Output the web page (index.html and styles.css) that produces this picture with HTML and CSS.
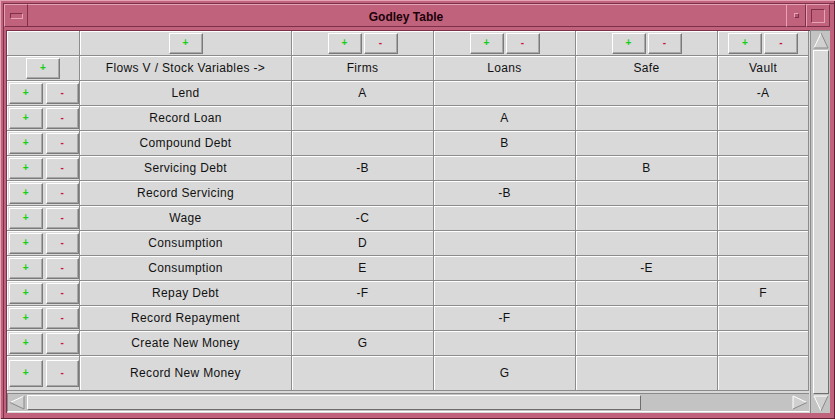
FILE: index.html
```html
<!DOCTYPE html>
<html>
<head>
<meta charset="utf-8">
<title>Godley Table</title>
<link rel="stylesheet" href="styles.css">
</head>
<body>
<div class="window">
  <div class="titlebar">
    <div class="tb-btn tb-menu"><span class="menu-icon"></span></div>
    <div class="tb-title">Godley Table</div>
    <div class="tb-btn tb-min"><span class="min-icon"></span></div>
    <div class="tb-btn tb-max"><span class="max-icon"></span></div>
  </div>
  <div class="client">
    <div class="main">
      <div class="table">
        <!-- row 0 -->
        <div class="cell"></div>
        <div class="cell"><span class="btn plus">+</span></div>
        <div class="cell pair"><span class="btn plus">+</span><span class="btn minus">-</span></div>
        <div class="cell pair"><span class="btn plus">+</span><span class="btn minus">-</span></div>
        <div class="cell pair"><span class="btn plus">+</span><span class="btn minus">-</span></div>
        <div class="cell pair"><span class="btn plus">+</span><span class="btn minus">-</span></div>
        <!-- row 1 -->
        <div class="cell"><span class="btn plus">+</span></div>
        <div class="cell">Flows V / Stock Variables -&gt;</div>
        <div class="cell">Firms</div>
        <div class="cell">Loans</div>
        <div class="cell">Safe</div>
        <div class="cell">Vault</div>
        <!-- data rows -->
        <div class="cell ctl"><span class="btn plus">+</span><span class="btn minus">-</span></div>
        <div class="cell">Lend</div><div class="cell">A</div><div class="cell"></div><div class="cell"></div><div class="cell">-A</div>

        <div class="cell ctl"><span class="btn plus">+</span><span class="btn minus">-</span></div>
        <div class="cell">Record Loan</div><div class="cell"></div><div class="cell">A</div><div class="cell"></div><div class="cell"></div>

        <div class="cell ctl"><span class="btn plus">+</span><span class="btn minus">-</span></div>
        <div class="cell">Compound Debt</div><div class="cell"></div><div class="cell">B</div><div class="cell"></div><div class="cell"></div>

        <div class="cell ctl"><span class="btn plus">+</span><span class="btn minus">-</span></div>
        <div class="cell">Servicing Debt</div><div class="cell">-B</div><div class="cell"></div><div class="cell">B</div><div class="cell"></div>

        <div class="cell ctl"><span class="btn plus">+</span><span class="btn minus">-</span></div>
        <div class="cell">Record Servicing</div><div class="cell"></div><div class="cell">-B</div><div class="cell"></div><div class="cell"></div>

        <div class="cell ctl"><span class="btn plus">+</span><span class="btn minus">-</span></div>
        <div class="cell">Wage</div><div class="cell">-C</div><div class="cell"></div><div class="cell"></div><div class="cell"></div>

        <div class="cell ctl"><span class="btn plus">+</span><span class="btn minus">-</span></div>
        <div class="cell">Consumption</div><div class="cell">D</div><div class="cell"></div><div class="cell"></div><div class="cell"></div>

        <div class="cell ctl"><span class="btn plus">+</span><span class="btn minus">-</span></div>
        <div class="cell">Consumption</div><div class="cell">E</div><div class="cell"></div><div class="cell">-E</div><div class="cell"></div>

        <div class="cell ctl"><span class="btn plus">+</span><span class="btn minus">-</span></div>
        <div class="cell">Repay Debt</div><div class="cell">-F</div><div class="cell"></div><div class="cell"></div><div class="cell">F</div>

        <div class="cell ctl"><span class="btn plus">+</span><span class="btn minus">-</span></div>
        <div class="cell">Record Repayment</div><div class="cell"></div><div class="cell">-F</div><div class="cell"></div><div class="cell"></div>

        <div class="cell ctl"><span class="btn plus">+</span><span class="btn minus">-</span></div>
        <div class="cell">Create New Money</div><div class="cell">G</div><div class="cell"></div><div class="cell"></div><div class="cell"></div>

        <div class="cell ctl tall"><span class="btn plus">+</span><span class="btn minus">-</span></div>
        <div class="cell">Record New Money</div><div class="cell"></div><div class="cell">G</div><div class="cell"></div><div class="cell"></div>
      </div>
      <div class="hscroll">
        <svg class="arrow" width="16" height="15" viewBox="0 0 16 15"><polygon points="1,7.5 15,1 15,14" fill="#d0d0d0"/><polyline points="15,1 1,7.5" fill="none" stroke="#ffffff"/><polyline points="1,7.5 15,14 15,1" fill="none" stroke="#8a8a8a"/></svg>
        <div class="htrack"><div class="hthumb"></div></div>
        <svg class="arrow" width="16" height="15" viewBox="0 0 16 15"><polygon points="15,7.5 1,1 1,14" fill="#d0d0d0"/><polyline points="1,14 1,1 15,7.5" fill="none" stroke="#ffffff"/><polyline points="15,7.5 1,14" fill="none" stroke="#8a8a8a"/></svg>
      </div>
    </div>
    <div class="vscroll">
      <svg class="arrow" width="16" height="17" viewBox="0 0 16 17"><polygon points="8,1 1,16 15,16" fill="#d0d0d0"/><polyline points="1,16 8,1" fill="none" stroke="#ffffff"/><polyline points="8,1 15,16 1,16" fill="none" stroke="#8a8a8a"/></svg>
      <div class="vthumb"></div>
      <svg class="arrow" width="16" height="17" viewBox="0 0 16 17"><polygon points="8,16 1,1 15,1" fill="#d0d0d0"/><polyline points="8,16 1,1 15,1" fill="none" stroke="#ffffff"/><polyline points="15,1 8,16" fill="none" stroke="#8a8a8a"/></svg>
    </div>
  </div>
</div>
</body>
</html>
```
FILE: styles.css
```css
html, body {
  margin: 0;
  padding: 0;
  background: #c1627c;
}

.window {
  width: 835px;
  height: 419px;
  box-sizing: border-box;
  background: #c1627c;
  padding: 0 5px 6px 6px;
  display: flex;
  flex-direction: column;
  box-shadow: inset 1px 1px 0 #e6a3b6, inset -1px -1px 0 #5e1e33, inset 3px 3px 0 #c1627c, inset 4px 4px 0 #7c3049;
  font-family: "Liberation Sans", Arial, sans-serif;
}

.titlebar {
  height: 30px;
  box-sizing: border-box;
  padding: 4px 0 3px 0;
  margin-left: -2px;
  display: flex;
}

.tb-btn {
  height: 23px;
  box-sizing: border-box;
  border-top: 1px solid #e6a3b6;
  border-left: 1px solid #e6a3b6;
  border-bottom: 1px solid #7c3049;
  border-right: 1px solid #7c3049;
  display: flex;
  align-items: center;
  justify-content: center;
}

.tb-menu { width: 24px; }
.tb-min { width: 20px; }
.tb-max { width: 24px; }

.menu-icon {
  width: 13px;
  height: 6px;
  box-sizing: border-box;
  border-top: 1px solid #7c3049;
  border-left: 1px solid #7c3049;
  border-bottom: 1px solid #e6a3b6;
  border-right: 1px solid #e6a3b6;
  margin-top: 1px;
}

.min-icon {
  width: 5px;
  height: 5px;
  box-sizing: border-box;
  background: #b05570;
  border-top: 1px solid #e6a3b6;
  border-left: 1px solid #e6a3b6;
  border-bottom: 1px solid #7c3049;
  border-right: 1px solid #7c3049;
}

.max-icon {
  width: 14px;
  height: 14px;
  box-sizing: border-box;
  border-top: 1px solid #7c3049;
  border-left: 1px solid #7c3049;
  border-bottom: 1px solid #e6a3b6;
  border-right: 1px solid #e6a3b6;
}

.tb-title {
  flex: 1;
  height: 23px;
  box-sizing: border-box;
  border-top: 1px solid #e6a3b6;
  border-bottom: 1px solid #7c3049;
  display: flex;
  align-items: center;
  justify-content: center;
  font-weight: bold;
  font-size: 12px;
  color: #1a0008;
  padding-right: 2px;
  padding-top: 2px;
}

.client {
  flex: 1;
  display: flex;
  background: #d9d9d9;
  box-shadow: inset 1px 1px 0 #7c3049;
}

.main {
  display: flex;
  flex-direction: column;
  padding: 1px 0 0 1px;
}

.table {
  display: grid;
  grid-template-columns: 73px 212px 142px 142px 142px 91px;
  grid-template-rows: repeat(13, 25px) 35px;
  width: 802px;
  background: #d9d9d9;
}

.cell {
  box-sizing: border-box;
  border-right: 1px solid #8c8c8c;
  border-bottom: 1px solid #8c8c8c;
  box-shadow: inset 1px 1px 0 #ffffff;
  display: flex;
  align-items: center;
  justify-content: center;
  font-size: 12px;
  letter-spacing: 0.35px;
  color: #111;
  gap: 2px;
}

.cell.ctl {
  justify-content: flex-start;
  padding-left: 2px;
  gap: 3px;
}

.btn {
  width: 34px;
  height: 21px;
  box-sizing: border-box;
  background: #d9d9d9;
  border-top: 1px solid #ffffff;
  border-left: 1px solid #ffffff;
  border-right: 1px solid #7a7a7a;
  border-bottom: 1px solid #7a7a7a;
  box-shadow: inset -1px -1px 0 #a8a8a8;
  display: flex;
  align-items: center;
  justify-content: center;
  font-weight: bold;
  font-size: 10px;
  letter-spacing: 0;
  line-height: 1;
}

.cell.tall .btn { height: 27px; }

.plus { color: #10d010; }
.minus { color: #d0103c; }

.hscroll {
  margin-top: 2px;
  height: 19px;
  width: 802px;
  box-sizing: border-box;
  display: flex;
  align-items: center;
  background: #c3c3c3;
  border-top: 1px solid #8a8a8a;
  border-left: 1px solid #8a8a8a;
  border-bottom: 1px solid #ffffff;
  padding: 0 1px;
}

.htrack {
  flex: 1;
  height: 17px;
  display: flex;
  align-items: center;
  padding: 0 2px;
}

.hthumb {
  width: 614px;
  height: 15px;
  box-sizing: border-box;
  background: #d9d9d9;
  border-top: 1px solid #ffffff;
  border-left: 1px solid #ffffff;
  border-right: 1px solid #6e6e6e;
  border-bottom: 1px solid #6e6e6e;
}

.vscroll {
  width: 20px;
  margin-left: 1px;
  box-sizing: border-box;
  display: flex;
  flex-direction: column;
  align-items: center;
  background: #c3c3c3;
  border-left: 1px solid #8a8a8a;
  border-top: 1px solid #8a8a8a;
  padding: 1px 0 1px 0;
}

.vthumb {
  flex: 1;
  width: 16px;
  margin: 1px 0;
  box-sizing: border-box;
  background: #d9d9d9;
  border-top: 1px solid #ffffff;
  border-left: 1px solid #ffffff;
  border-right: 1px solid #6e6e6e;
  border-bottom: 1px solid #6e6e6e;
}

.arrow { display: block; flex: none; }
```
